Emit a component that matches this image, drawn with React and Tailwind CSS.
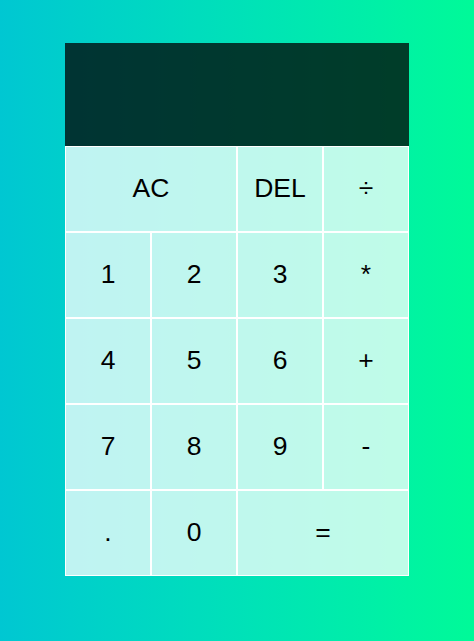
import React from 'react';

const buttons = [
  { label: 'AC', wide: true },
  { label: 'DEL' },
  { label: '÷' },
  { label: '1' },
  { label: '2' },
  { label: '3' },
  { label: '*' },
  { label: '4' },
  { label: '5' },
  { label: '6' },
  { label: '+' },
  { label: '7' },
  { label: '8' },
  { label: '9' },
  { label: '-' },
  { label: '.' },
  { label: '0' },
  { label: '=', wide: true },
];

const App = () => {
  return (
    <div
      className="min-h-[641px] w-full bg-gradient-to-r from-[#00c7d2] to-[#00fa98] flex justify-center pt-[43px]"
      style={{ fontFamily: '"Liberation Sans", Arial, sans-serif' }}
    >
      <div className="grid grid-cols-[repeat(4,86px)] grid-rows-[minmax(103px,auto)_repeat(5,86px)] h-fit">
        <div className="col-span-4 bg-black/75 flex flex-col items-end justify-around p-2.5 break-all">
          <div className="text-white/75 text-2xl"></div>
          <div className="text-white text-[2.5rem]"></div>
        </div>
        {buttons.map((b) => (
          <button
            key={b.label}
            className={`${b.wide ? 'col-span-2' : ''} text-[26.5px] text-black border border-white bg-white/75 cursor-pointer outline-none`}
          >
            {b.label}
          </button>
        ))}
      </div>
    </div>
  );
};

export default App;
